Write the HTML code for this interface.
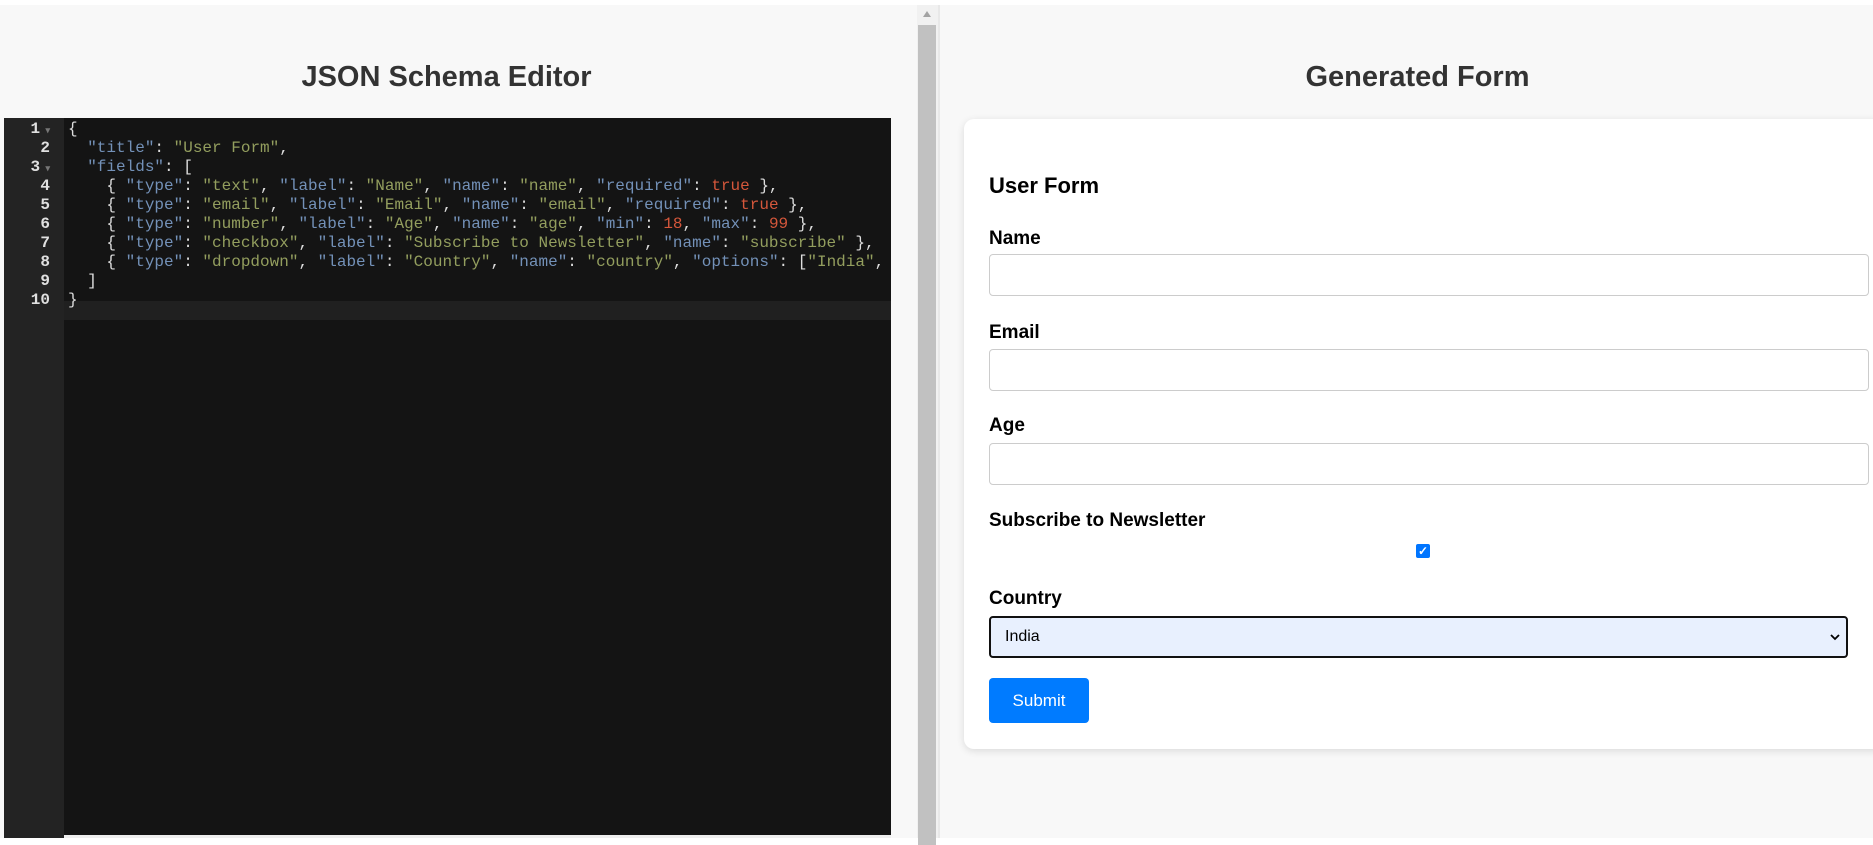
<!DOCTYPE html>
<html><head><meta charset="utf-8"><style>
*{box-sizing:border-box;margin:0;padding:0}
body{width:1873px;height:838px;overflow:hidden;background:#fff;font-family:"Liberation Sans",sans-serif;position:relative}
.left{position:absolute;left:0;top:5px;width:917px;height:833px;background:#f8f8f8}
.sb{position:absolute;left:917px;top:5px;width:21px;height:833px;background:#f1f1f1}
.sb .th{position:absolute;left:1px;top:20px;width:18px;height:820px;background:#c1c1c1}
.sb .ar{position:absolute;left:6px;top:6px;width:0;height:0;border-left:4px solid transparent;border-right:4px solid transparent;border-bottom:6px solid #a3a3a3}
.right{position:absolute;left:938px;top:5px;width:935px;height:833px;background:#f8f8f8;border-left:2px solid #e8e8e8}
h2{position:absolute;font-size:29px;font-weight:bold;color:#333;top:61px;text-align:center}
.ed{position:absolute;left:4px;top:118px;width:887px;height:720px;background:#141414}
.gut{position:absolute;left:0;top:0;width:60px;height:720px;background:#232323}
.ln{position:absolute;font-family:"Liberation Mono",monospace;font-size:16px;line-height:19px;height:19px;white-space:pre;color:#ddd}
.num{left:0;width:46px;text-align:right;color:#e0e0e0;font-weight:bold}
.code{left:64px}
.act{position:absolute;left:60px;top:183px;width:827px;height:19px;background:#202020}
.k{color:#7391b8}.s{color:#939e5e}.n{color:#d5573b}
.hs{position:absolute;left:60px;top:717px;width:827px;height:3px;background:#eee}
.card{position:absolute;left:964px;top:119px;width:920px;height:630px;background:#fff;border-radius:10px;box-shadow:0 2px 8px rgba(0,0,0,.12)}
.lb{position:absolute;left:989px;font-size:19px;font-weight:bold;color:#000}
.in{position:absolute;left:989px;width:880px;height:42px;border:1px solid #ccc;border-radius:4px;background:#fff}
</style></head><body>
<div class="left"></div>
<div class="sb"><div class="ar"></div><div class="th"></div></div>
<div class="right"></div>
<h2 style="left:0;width:893px">JSON Schema Editor</h2>
<h2 style="left:940px;width:955px">Generated Form</h2>
<div class="ed">
<div class="gut"></div>
<div class="act"></div>
<div class="hs"></div>
<div style="position:absolute;top:2px;left:0;width:887px">
<div class="ln num" style="top:0">1<span style="color:#777;font-size:9px"> ▾</span></div>
<div class="ln num" style="top:19px">2</div>
<div class="ln num" style="top:38px">3<span style="color:#777;font-size:9px"> ▾</span></div>
<div class="ln num" style="top:57px">4</div>
<div class="ln num" style="top:76px">5</div>
<div class="ln num" style="top:95px">6</div>
<div class="ln num" style="top:114px">7</div>
<div class="ln num" style="top:133px">8</div>
<div class="ln num" style="top:152px">9</div>
<div class="ln num" style="top:171px">10</div>
<div class="ln code" style="top:0">{</div>
<div class="ln code" style="top:19px">  <span class="k">"title"</span>: <span class="s">"User Form"</span>,</div>
<div class="ln code" style="top:38px">  <span class="k">"fields"</span>: [</div>
<div class="ln code" style="top:57px">    { <span class="k">"type"</span>: <span class="s">"text"</span>, <span class="k">"label"</span>: <span class="s">"Name"</span>, <span class="k">"name"</span>: <span class="s">"name"</span>, <span class="k">"required"</span>: <span class="n">true</span> },</div>
<div class="ln code" style="top:76px">    { <span class="k">"type"</span>: <span class="s">"email"</span>, <span class="k">"label"</span>: <span class="s">"Email"</span>, <span class="k">"name"</span>: <span class="s">"email"</span>, <span class="k">"required"</span>: <span class="n">true</span> },</div>
<div class="ln code" style="top:95px">    { <span class="k">"type"</span>: <span class="s">"number"</span>, <span class="k">"label"</span>: <span class="s">"Age"</span>, <span class="k">"name"</span>: <span class="s">"age"</span>, <span class="k">"min"</span>: <span class="n">18</span>, <span class="k">"max"</span>: <span class="n">99</span> },</div>
<div class="ln code" style="top:114px">    { <span class="k">"type"</span>: <span class="s">"checkbox"</span>, <span class="k">"label"</span>: <span class="s">"Subscribe to Newsletter"</span>, <span class="k">"name"</span>: <span class="s">"subscribe"</span> },</div>
<div class="ln code" style="top:133px;width:823px;overflow:hidden">    { <span class="k">"type"</span>: <span class="s">"dropdown"</span>, <span class="k">"label"</span>: <span class="s">"Country"</span>, <span class="k">"name"</span>: <span class="s">"country"</span>, <span class="k">"options"</span>: [<span class="s">"India"</span>, <span class="s">"USA"</span>] }</div>
<div class="ln code" style="top:152px">  ]</div>
<div class="ln code" style="top:171px">}</div>
</div>
</div>
<div class="card"></div>
<div class="lb" style="top:173px;font-size:22px">User Form</div>
<div class="lb" style="top:228px">Name</div>
<div class="in" style="top:254px"></div>
<div class="lb" style="top:322px">Email</div>
<div class="in" style="top:349px"></div>
<div class="lb" style="top:415px">Age</div>
<div class="in" style="top:443px"></div>
<div class="lb" style="top:510px">Subscribe to Newsletter</div>
<div style="position:absolute;left:1416px;top:544px;width:14px;height:14px;background:#0075ff;border-radius:2px;color:#fff;font-size:12px;line-height:14px;text-align:center;font-weight:bold">✓</div>
<div class="lb" style="top:588px">Country</div>
<div style="position:absolute;left:989px;top:616px;width:859px;height:42px;background:#e8f0fe;border:2px solid #111;border-radius:4px;font-size:16px;line-height:38px;padding-left:14px;color:#000">India<svg style="position:absolute;right:6px;top:15px" width="10" height="8" viewBox="0 0 10 8"><path d="M1 2 L5 6 L9 2" fill="none" stroke="#000" stroke-width="1.8"/></svg></div>
<div style="position:absolute;left:989px;top:678px;width:100px;height:45px;background:#007bff;border-radius:4px;color:#fff;font-size:17px;line-height:45px;text-align:center">Submit</div>
</body></html>
